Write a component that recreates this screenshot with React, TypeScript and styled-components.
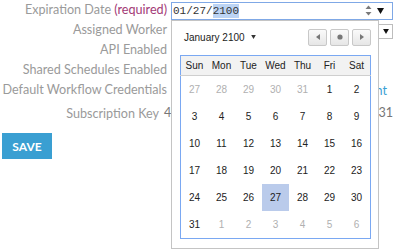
import React from 'react';
import styled, { createGlobalStyle, css } from 'styled-components';

const GlobalStyle = createGlobalStyle`
  html, body {
    margin: 0;
    padding: 0;
    background: #ffffff;
  }
  body {
    font-family: Lato, "Liberation Sans", sans-serif;
  }
`;

const Page = styled.div`
  position: relative;
  width: 399px;
  height: 251px;
  overflow: hidden;
  padding-left: 2px;
  box-sizing: border-box;
`;

const Form = styled.div`
  display: grid;
  grid-template-columns: 165px 222px;
  column-gap: 4px;
  grid-auto-rows: 20px;
`;

const Label = styled.div<{ $pad?: number; $top?: number }>`
  font-size: 12.6px;
  line-height: 20px;
  color: #9a9a9a;
  text-align: right;
  white-space: nowrap;
  padding-right: ${({ $pad }) => $pad ?? 0}px;
  margin-top: ${({ $top }) => $top ?? 0}px;
`;

const Required = styled.span`
  color: #a33a76;
`;

const Value = styled.div<{ $top?: number }>`
  display: flex;
  align-items: center;
  justify-content: flex-end;
  min-width: 0;
  margin-top: ${({ $top }) => $top ?? 0}px;
`;

const DateField = styled.div`
  position: relative;
  display: flex;
  align-items: center;
  width: 222px;
  height: 18px;
  margin-top: 1px;
  box-sizing: border-box;
  border: 1px solid #7fa8e6;
  padding-left: 1px;
  font-family: "Liberation Mono", monospace;
  font-size: 11px;
  color: #333;
`;

const Segment = styled.span<{ $selected?: boolean }>`
  line-height: 14px;
  ${({ $selected }) =>
    $selected &&
    css`
      background: #bcd4f4;
    `}
`;

const FieldIcons = styled.div`
  margin-left: auto;
  display: flex;
  align-items: center;
  gap: 5px;
  padding-right: 8px;
`;

const SelectBox = styled.div`
  width: 220px;
  height: 15px;
  margin-top: 2px;
  box-sizing: border-box;
  border: 1px solid #bdbdbd;
  display: flex;
  align-items: center;
  justify-content: flex-end;
  padding-right: 3px;
`;

const Link = styled.span`
  font-size: 12.6px;
  color: #3a9fd4;
  padding-right: 6px;
  white-space: nowrap;
`;

const KeyText = styled.span`
  font-size: 12.6px;
  color: #777;
  margin-left: -8px;
  white-space: nowrap;
  width: 229px;
  display: flex;
  justify-content: space-between;
`;

const SaveButton = styled.button`
  margin-top: 13px;
  width: 50px;
  height: 26px;
  border: none;
  background: #3a9fd2;
  color: #fff;
  font-family: Lato, "Liberation Sans", sans-serif;
  font-weight: 700;
  font-size: 12px;
  padding: 0;
  display: block;
`;

const Popup = styled.div`
  position: absolute;
  left: -1px;
  top: 17px;
  width: 208px;
  box-sizing: border-box;
  border: 1px solid #c4c4c4;
  background: #fff;
  padding: 8px 7px 9px 8px;
  font-family: "Liberation Sans", Arial, sans-serif;
  color: #222;
  z-index: 2;
`;

const PopupHeader = styled.div`
  display: flex;
  align-items: center;
  height: 17px;
  padding-left: 4px;
  margin-bottom: 9px;
`;

const MonthLabel = styled.span`
  font-size: 10px;
  display: flex;
  align-items: center;
  gap: 6px;
`;

const NavGroup = styled.div`
  margin-left: auto;
  display: flex;
  gap: 3px;
`;

const NavButton = styled.div`
  width: 19px;
  height: 17px;
  box-sizing: border-box;
  border: 1px solid #c8c8c8;
  border-radius: 2px;
  background: linear-gradient(#fafafa, #e6e6e6);
  display: flex;
  align-items: center;
  justify-content: center;
`;

const Table = styled.table`
  border-collapse: collapse;
  border: 1px solid #7aa8f2;
  table-layout: fixed;
`;

const HeadCell = styled.th`
  width: 27px;
  height: 19px;
  padding: 0;
  font-size: 10px;
  font-weight: 400;
  background: #f2f2f2;
  border-bottom: 1px solid #cfcfcf;
  text-align: center;
`;

const DayCell = styled.td<{ $muted?: boolean; $selected?: boolean }>`
  width: 27px;
  height: 27px;
  padding: 0;
  font-size: 10px;
  text-align: center;
  color: ${({ $muted }) => ($muted ? '#b0b0b0' : '#222')};
  background: ${({ $selected }) => ($selected ? '#bacbeb' : 'transparent')};
`;

const days = ['Sun', 'Mon', 'Tue', 'Wed', 'Thu', 'Fri', 'Sat'];

const weeks: { d: number; m?: boolean }[][] = [
  [{ d: 27, m: true }, { d: 28, m: true }, { d: 29, m: true }, { d: 30, m: true }, { d: 31, m: true }, { d: 1 }, { d: 2 }],
  [{ d: 3 }, { d: 4 }, { d: 5 }, { d: 6 }, { d: 7 }, { d: 8 }, { d: 9 }],
  [{ d: 10 }, { d: 11 }, { d: 12 }, { d: 13 }, { d: 14 }, { d: 15 }, { d: 16 }],
  [{ d: 17 }, { d: 18 }, { d: 19 }, { d: 20 }, { d: 21 }, { d: 22 }, { d: 23 }],
  [{ d: 24 }, { d: 25 }, { d: 26 }, { d: 27 }, { d: 28 }, { d: 29 }, { d: 30 }],
  [{ d: 31 }, { d: 1, m: true }, { d: 2, m: true }, { d: 3, m: true }, { d: 4, m: true }, { d: 5, m: true }, { d: 6, m: true }],
];

const Spinner = () => (
  <svg width="7" height="11" viewBox="0 0 7 11">
    <path d="M3.5 0.5 L6.5 4 H0.5 Z" fill="#7a7a7a" />
    <path d="M3.5 10.5 L6.5 7 H0.5 Z" fill="#7a7a7a" />
  </svg>
);

const DownArrow = ({ size = 7, color = '#111' }: { size?: number; color?: string }) => (
  <svg width={size} height={size - 1} viewBox="0 0 7 6">
    <path d="M0 0 H7 L3.5 6 Z" fill={color} />
  </svg>
);

const App: React.FC = () => (
  <Page>
    <GlobalStyle />
    <Form>
      <Label>
        Expiration Date <Required>(required)</Required>
      </Label>
      <Value>
        <DateField>
          <Segment>01</Segment>
          <Segment>/</Segment>
          <Segment>27</Segment>
          <Segment>/</Segment>
          <Segment $selected>2100</Segment>
          <FieldIcons>
            <Spinner />
            <DownArrow />
          </FieldIcons>
          <Popup>
            <PopupHeader>
              <MonthLabel>
                January 2100
                <DownArrow size={5} color="#333" />
              </MonthLabel>
              <NavGroup>
                <NavButton>
                  <svg width="4" height="6" viewBox="0 0 4 6">
                    <path d="M4 0 V6 L0 3 Z" fill="#777" />
                  </svg>
                </NavButton>
                <NavButton>
                  <svg width="6" height="6" viewBox="0 0 6 6">
                    <circle cx="3" cy="3" r="2.6" fill="#777" />
                  </svg>
                </NavButton>
                <NavButton>
                  <svg width="4" height="6" viewBox="0 0 4 6">
                    <path d="M0 0 V6 L4 3 Z" fill="#777" />
                  </svg>
                </NavButton>
              </NavGroup>
            </PopupHeader>
            <Table>
              <thead>
                <tr>
                  {days.map((d) => (
                    <HeadCell key={d}>{d}</HeadCell>
                  ))}
                </tr>
              </thead>
              <tbody>
                {weeks.map((w, i) => (
                  <tr key={i}>
                    {w.map((c, j) => (
                      <DayCell key={j} $muted={c.m} $selected={i === 4 && c.d === 27}>
                        {c.d}
                      </DayCell>
                    ))}
                  </tr>
                ))}
              </tbody>
            </Table>
          </Popup>
        </DateField>
      </Value>

      <Label>Assigned Worker</Label>
      <Value>
        <SelectBox>
          <DownArrow size={6} />
        </SelectBox>
      </Value>

      <Label>API Enabled</Label>
      <Value />

      <Label>Shared Schedules Enabled</Label>
      <Value />

      <Label>Default Workflow Credentials</Label>
      <Value>
        <Link>Account</Link>
      </Value>

      <Label $pad={8} $top={4}>
        Subscription Key
      </Label>
      <Value $top={4}>
        <KeyText>
          <span>4</span>
          <span>31</span>
        </KeyText>
      </Value>
    </Form>
    <SaveButton>SAVE</SaveButton>
  </Page>
);

export default App;
